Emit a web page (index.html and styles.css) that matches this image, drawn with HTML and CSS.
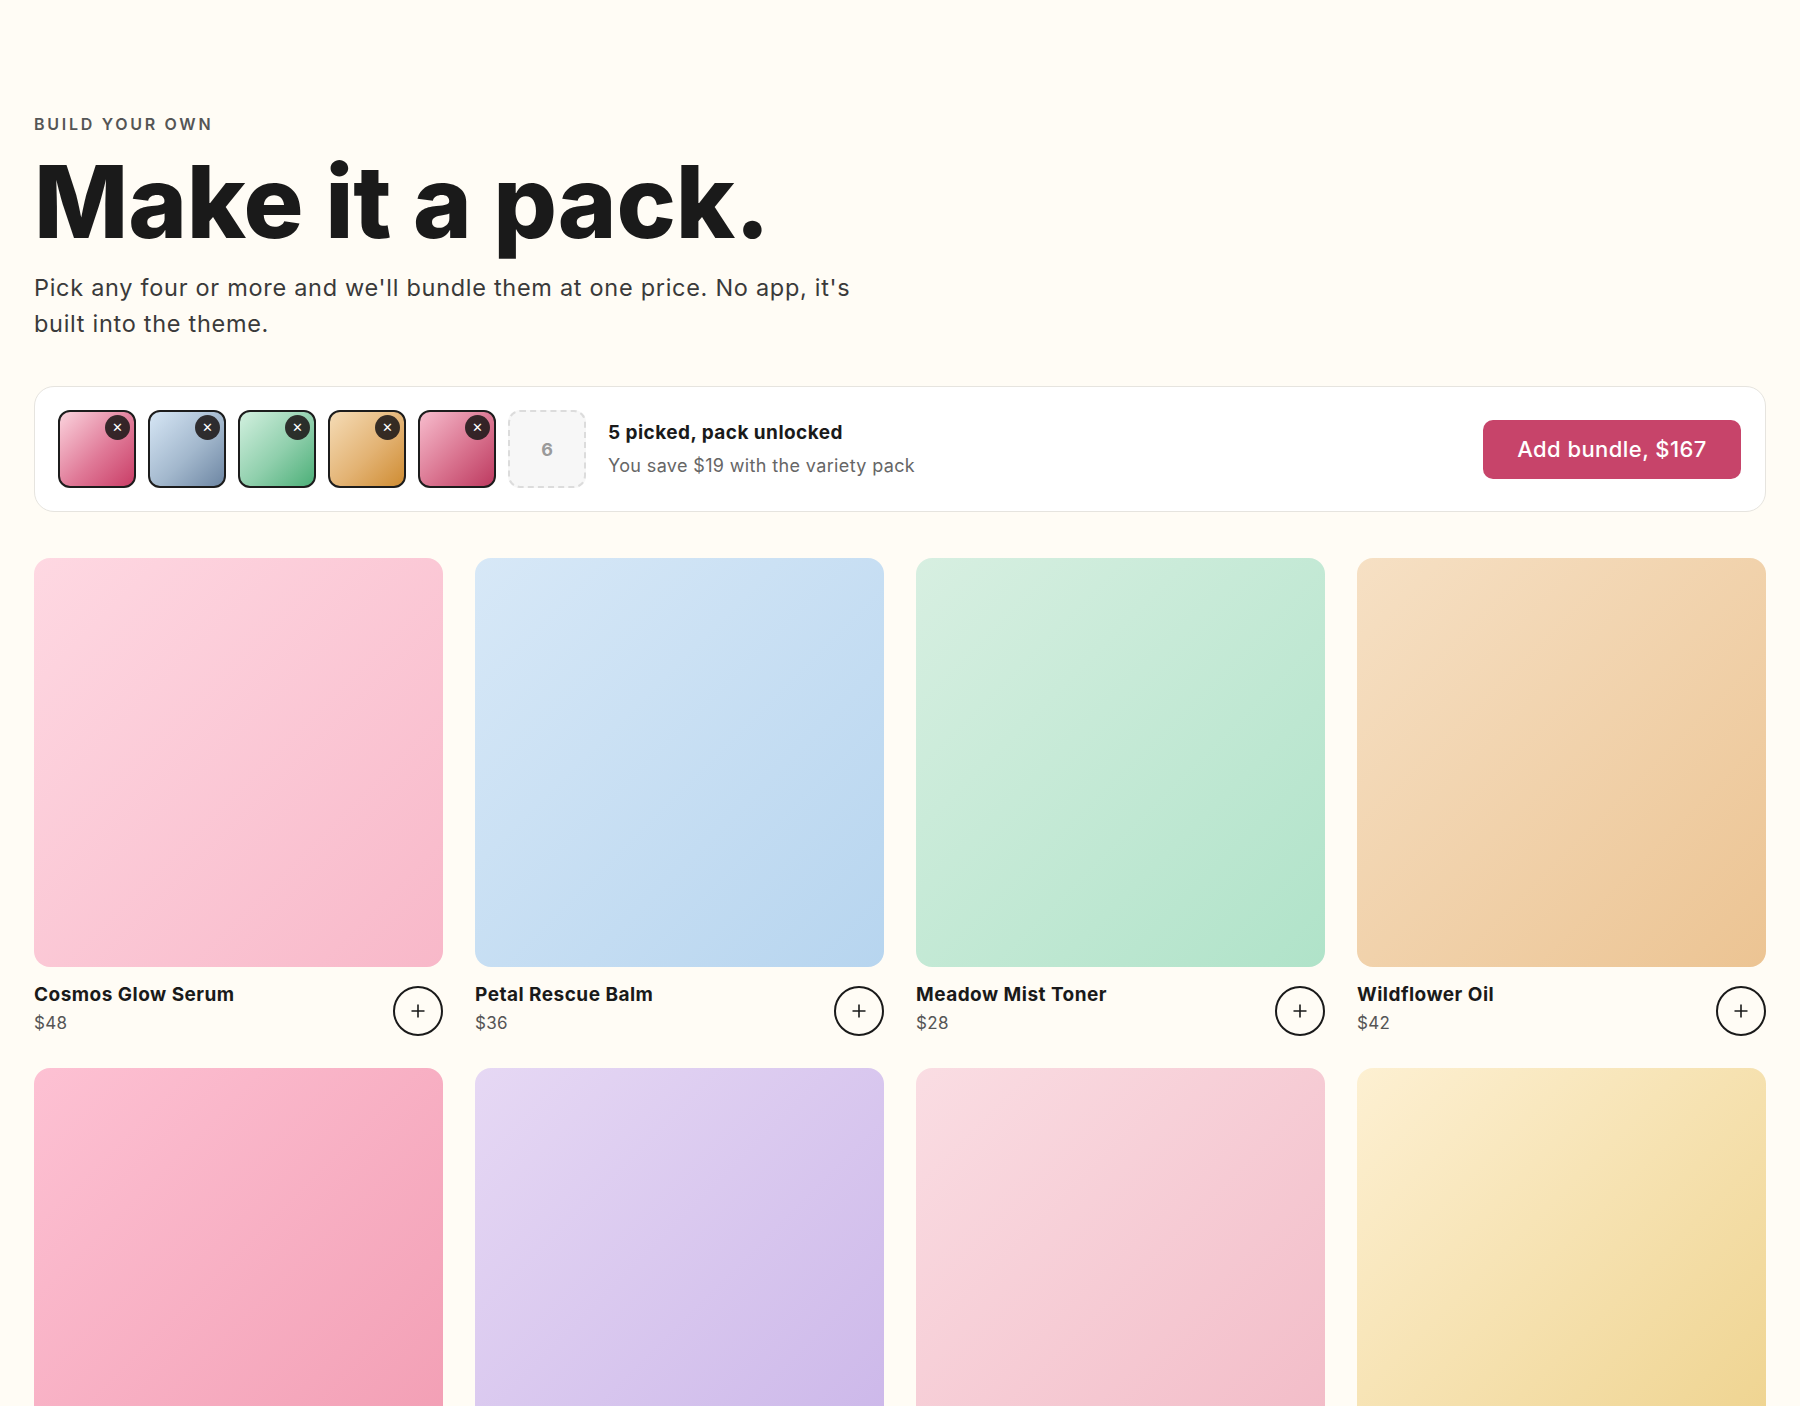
FILE: index.html
```html
<!DOCTYPE html>
<html lang="en">
<head>
<meta charset="utf-8">
<title>Make it a pack</title>
<link rel="stylesheet" href="styles.css">
</head>
<body>
<main class="page">
  <header class="intro">
    <p class="eyebrow">Build your own</p>
    <h1 class="title">Make it a pack.</h1>
    <p class="lede">Pick any four or more and we'll bundle them at one price. No app, it's built into the theme.</p>
  </header>

  <section class="bundle">
    <div class="slots">
      <div class="slot filled g-pink"><span class="remove">&#x2715;</span></div>
      <div class="slot filled g-blue"><span class="remove">&#x2715;</span></div>
      <div class="slot filled g-green"><span class="remove">&#x2715;</span></div>
      <div class="slot filled g-amber"><span class="remove">&#x2715;</span></div>
      <div class="slot filled g-rose"><span class="remove">&#x2715;</span></div>
      <div class="slot empty">6</div>
    </div>
    <div class="status">
      <p class="status-title">5 picked, pack unlocked</p>
      <p class="status-sub">You save $19 with the variety pack</p>
    </div>
    <button class="cta">Add bundle, $167</button>
  </section>

  <section class="grid">
    <article class="card">
      <div class="shot p1"></div>
      <div class="info">
        <div class="meta"><h3 class="name">Cosmos Glow Serum</h3><p class="price">$48</p></div>
        <button class="add" aria-label="Add"><svg viewBox="0 0 16 16" width="16" height="16"><path d="M8 1.5v13M1.5 8h13" stroke="#1a1a1a" stroke-width="1.6" fill="none"/></svg></button>
      </div>
    </article>
    <article class="card">
      <div class="shot p2"></div>
      <div class="info">
        <div class="meta"><h3 class="name">Petal Rescue Balm</h3><p class="price">$36</p></div>
        <button class="add" aria-label="Add"><svg viewBox="0 0 16 16" width="16" height="16"><path d="M8 1.5v13M1.5 8h13" stroke="#1a1a1a" stroke-width="1.6" fill="none"/></svg></button>
      </div>
    </article>
    <article class="card">
      <div class="shot p3"></div>
      <div class="info">
        <div class="meta"><h3 class="name">Meadow Mist Toner</h3><p class="price">$28</p></div>
        <button class="add" aria-label="Add"><svg viewBox="0 0 16 16" width="16" height="16"><path d="M8 1.5v13M1.5 8h13" stroke="#1a1a1a" stroke-width="1.6" fill="none"/></svg></button>
      </div>
    </article>
    <article class="card">
      <div class="shot p4"></div>
      <div class="info">
        <div class="meta"><h3 class="name">Wildflower Oil</h3><p class="price">$42</p></div>
        <button class="add" aria-label="Add"><svg viewBox="0 0 16 16" width="16" height="16"><path d="M8 1.5v13M1.5 8h13" stroke="#1a1a1a" stroke-width="1.6" fill="none"/></svg></button>
      </div>
    </article>
    <article class="card">
      <div class="shot p5"></div>
      <div class="info">
        <div class="meta"><h3 class="name">Rose Clay Mask</h3><p class="price">$34</p></div>
        <button class="add" aria-label="Add"><svg viewBox="0 0 16 16" width="16" height="16"><path d="M8 1.5v13M1.5 8h13" stroke="#1a1a1a" stroke-width="1.6" fill="none"/></svg></button>
      </div>
    </article>
    <article class="card">
      <div class="shot p6"></div>
      <div class="info">
        <div class="meta"><h3 class="name">Lavender Night Cream</h3><p class="price">$44</p></div>
        <button class="add" aria-label="Add"><svg viewBox="0 0 16 16" width="16" height="16"><path d="M8 1.5v13M1.5 8h13" stroke="#1a1a1a" stroke-width="1.6" fill="none"/></svg></button>
      </div>
    </article>
    <article class="card">
      <div class="shot p7"></div>
      <div class="info">
        <div class="meta"><h3 class="name">Blush Lip Tint</h3><p class="price">$22</p></div>
        <button class="add" aria-label="Add"><svg viewBox="0 0 16 16" width="16" height="16"><path d="M8 1.5v13M1.5 8h13" stroke="#1a1a1a" stroke-width="1.6" fill="none"/></svg></button>
      </div>
    </article>
    <article class="card">
      <div class="shot p8"></div>
      <div class="info">
        <div class="meta"><h3 class="name">Honey Body Butter</h3><p class="price">$38</p></div>
        <button class="add" aria-label="Add"><svg viewBox="0 0 16 16" width="16" height="16"><path d="M8 1.5v13M1.5 8h13" stroke="#1a1a1a" stroke-width="1.6" fill="none"/></svg></button>
      </div>
    </article>
  </section>
</main>
</body>
</html>
```

FILE: styles.css
```css
* { box-sizing: border-box; }

html, body {
  margin: 0;
  padding: 0;
  background: #fffcf5;
}

body {
  font-family: Inter, "Noto Sans", "Liberation Sans", sans-serif;
  color: #1a1a1a;
}

.page {
  padding: 114px 34px 60px;
}

.eyebrow {
  margin: 0;
  font-size: 16px;
  line-height: 20px;
  font-weight: 600;
  letter-spacing: 0.17em;
  text-transform: uppercase;
  color: #555;
}

.title {
  margin: 18px 0 0;
  font-size: 100px;
  line-height: 1;
  font-weight: 800;
  letter-spacing: -0.002em;
  color: #1a1a1a;
}

.lede {
  margin: 18px 0 0;
  max-width: 850px;
  font-size: 23.5px;
  line-height: 36px;
  letter-spacing: 0.03em;
  color: #3a3a3a;
}

.bundle {
  margin-top: 44px;
  display: flex;
  align-items: center;
  gap: 22px;
  padding: 23px 24px 23px 23px;
  background: #ffffff;
  border: 1px solid #e6e4df;
  border-radius: 20px;
}

.slots {
  display: flex;
  gap: 12px;
}

.slot {
  position: relative;
  width: 78px;
  height: 78px;
  border-radius: 12px;
}

.slot.filled {
  border: 2px solid #1c1c1c;
}

.g-pink  { background: linear-gradient(135deg, #fbd3dd 0%, #e07a98 55%, #c93d66 100%); }
.g-blue  { background: linear-gradient(135deg, #d6e6f5 0%, #a3b8cd 55%, #6d86a3 100%); }
.g-green { background: linear-gradient(135deg, #d2f0df 0%, #8fcfac 55%, #4caf78 100%); }
.g-amber { background: linear-gradient(135deg, #f5dcb6 0%, #e3b374 55%, #cf8c32 100%); }
.g-rose  { background: linear-gradient(135deg, #f7bccd 0%, #d9738f 55%, #bd3a60 100%); }

.remove {
  position: absolute;
  top: 3px;
  right: 4px;
  width: 25px;
  height: 25px;
  border-radius: 50%;
  background: rgba(28, 24, 24, 0.88);
  color: #fff;
  font-size: 13px;
  line-height: 25px;
  text-align: center;
  font-family: "DejaVu Sans", sans-serif;
}

.slot.empty {
  border: 2px dashed #dcdcdc;
  background: #f7f7f7;
  display: flex;
  align-items: center;
  justify-content: center;
  font-size: 18px;
  font-weight: 700;
  color: #9a9a9a;
}

.status {
  flex: 1;
}

.status-title {
  margin: 0;
  font-size: 19px;
  line-height: 26px;
  font-weight: 700;
  letter-spacing: 0.024em;
  color: #1a1a1a;
}

.status-sub {
  margin: 8px 0 0;
  font-size: 18px;
  line-height: 24px;
  letter-spacing: 0.02em;
  color: #666;
}

.cta {
  width: 258px;
  height: 59px;
  border: 0;
  border-radius: 10px;
  background: #c7446a;
  color: #fff;
  font-family: inherit;
  font-size: 22px;
  font-weight: 500;
  letter-spacing: 0.02em;
  cursor: pointer;
}

.grid {
  margin-top: 46px;
  display: grid;
  grid-template-columns: repeat(4, 1fr);
  column-gap: 32px;
  row-gap: 32px;
}

.shot {
  aspect-ratio: 1 / 1;
  border-radius: 16px;
}

.p1 { background: linear-gradient(135deg, #fed8e2 0%, #f8b8c9 100%); }
.p2 { background: linear-gradient(135deg, #d7e8f7 0%, #b7d5ef 100%); }
.p3 { background: linear-gradient(135deg, #d7efe1 0%, #b0e3c9 100%); }
.p4 { background: linear-gradient(135deg, #f6e0c4 0%, #ecc493 100%); }
.p5 { background: linear-gradient(135deg, #fdc1d3 0%, #f29db3 100%); }
.p6 { background: linear-gradient(135deg, #e6d8f4 0%, #cbb6e9 100%); }
.p7 { background: linear-gradient(135deg, #fadde3 0%, #f2bac6 100%); }
.p8 { background: linear-gradient(135deg, #fdf0d2 0%, #eed28c 100%); }

.info {
  margin-top: 12px;
  display: flex;
  align-items: center;
  justify-content: space-between;
}

.name {
  margin: 0;
  font-size: 19px;
  line-height: 28px;
  font-weight: 700;
  letter-spacing: 0.025em;
  color: #1a1a1a;
}

.price {
  margin: 2px 0 0;
  font-size: 17px;
  line-height: 24px;
  letter-spacing: 0.02em;
  color: #555;
}

.add {
  margin-top: 7px;
  width: 50px;
  height: 50px;
  border-radius: 50%;
  border: 2px solid #1a1a1a;
  background: transparent;
  display: flex;
  align-items: center;
  justify-content: center;
  padding: 0;
  cursor: pointer;
}
```
